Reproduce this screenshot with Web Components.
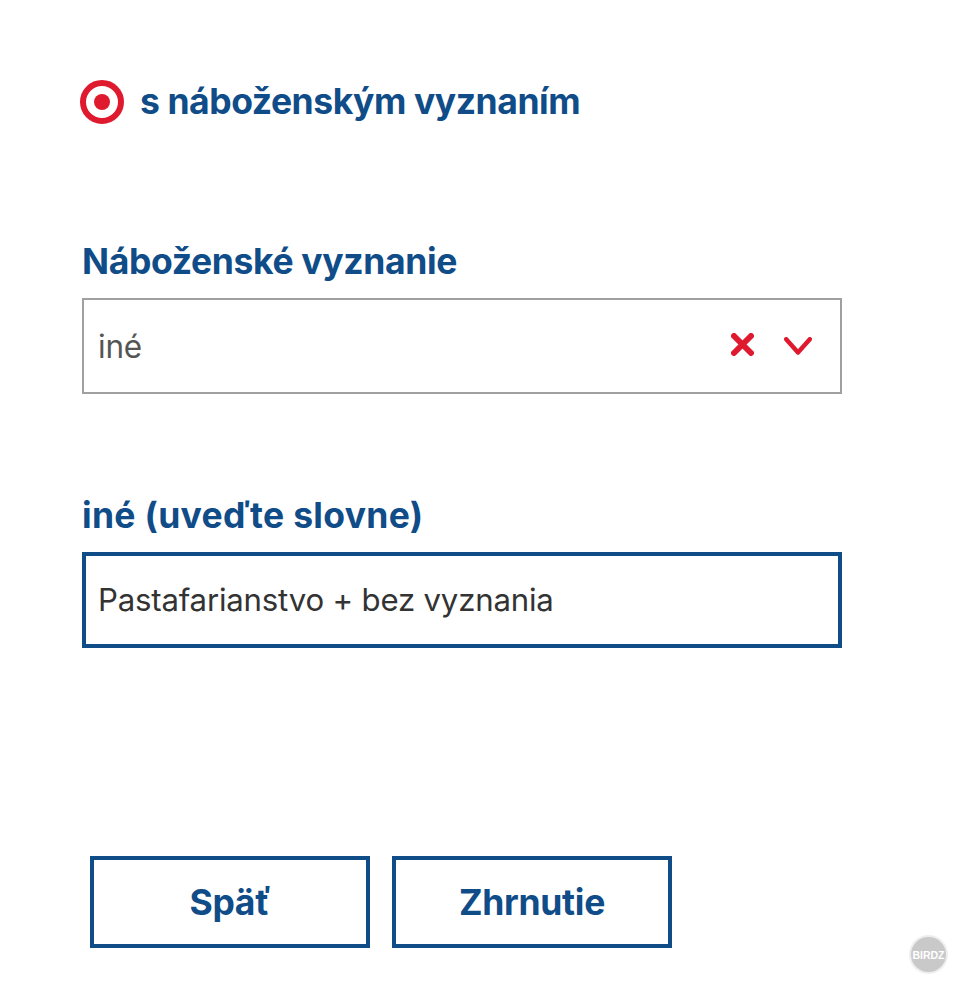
<!DOCTYPE html>
<html lang="sk"><head><meta charset="utf-8"><title>Formulár</title>
<style>
html,body{margin:0;padding:0;background:#fff;}
body{font-family:Inter,"Noto Sans",sans-serif;width:958px;height:984px;overflow:hidden;position:relative;}
</style></head><body>
<form-page>
<section-title>s náboženským vyznaním</section-title>
<form-field label="Náboženské vyznanie" style="margin-top:118px"><select-box>iné</select-box></form-field>
<form-field label="iné (uveďte slovne)" style="margin-top:102px;--ls:.3px"><text-box>Pastafarianstvo + bez vyznania</text-box></form-field>
<button-row><nav-button>Späť</nav-button><nav-button>Zhrnutie</nav-button></button-row>
</form-page>
<birdz-badge></birdz-badge>
<script>
function def(name,html){customElements.define(name,class extends HTMLElement{constructor(){super();this.attachShadow({mode:'open'}).innerHTML=html;}});}
def('form-page',`<style>:host{display:block;padding:80px 0 0 82px;box-sizing:border-box;width:958px}</style><slot></slot>`);
def('section-title',`<style>:host{display:flex;align-items:center;gap:16px;margin-left:-2px;height:44px;color:#0f4c88;font-size:35.5px;font-weight:700;letter-spacing:-.45px}
svg{width:44px;height:44px;flex:none}span{padding-bottom:2px}</style>
<svg viewBox="0 0 44 44"><circle cx="22" cy="22" r="19" fill="none" stroke="#df1a2e" stroke-width="6"/><circle cx="22" cy="22" r="8" fill="#df1a2e"/></svg><span><slot></slot></span>`);
customElements.define('form-field',class extends HTMLElement{constructor(){super();this.attachShadow({mode:'open'}).innerHTML=`<style>:host{display:block;width:760px}
.l{color:#0f4c88;font-size:35.5px;font-weight:700;letter-spacing:var(--ls,-.35px);line-height:40px;margin-bottom:16px}</style><div class="l"></div><slot></slot>`;}
connectedCallback(){this.shadowRoot.querySelector('.l').textContent=this.getAttribute('label');}});
def('select-box',`<style>:host{display:flex;align-items:center;box-sizing:border-box;height:96px;border:2.5px solid #a0a0a0;padding:0 28.5px 0 14px;color:#555;font-size:31.5px;letter-spacing:-.2px}
span{flex:1}svg{display:block}</style><span><slot></slot></span>
<svg width="23" height="23" viewBox="0 0 23 23" style="margin-right:29.5px;margin-top:-3px"><path d="M3 3L20 20M20 3L3 20" stroke="#df1a2e" stroke-width="6" stroke-linecap="round"/></svg>
<svg width="28" height="18" viewBox="0 0 28 18"><path d="M2.2 2.2L14 15.5L25.8 2.2" fill="none" stroke="#df1a2e" stroke-width="4.4" stroke-linecap="round" stroke-linejoin="round"/></svg>`);
def('text-box',`<style>:host{display:flex;align-items:center;box-sizing:border-box;height:96px;border:4px solid #0f4c88;padding:0 12px;color:#333;font-size:31.2px;letter-spacing:-.2px}</style><slot></slot>`);
def('button-row',`<style>:host{display:flex;gap:22px;margin:208px 0 0 8px}</style><slot></slot>`);
def('nav-button',`<style>:host{display:flex;align-items:center;justify-content:center;box-sizing:border-box;width:280px;height:92px;border:4px solid #0f4c88;color:#0f4c88;font-size:35.5px;font-weight:700;letter-spacing:-.3px}</style><slot></slot>`);
def('birdz-badge',`<style>:host{position:absolute;left:911px;top:937px;width:35px;height:35px;border-radius:50%;background:#c9c9c9;box-shadow:0 0 0 2px #eee;display:flex;align-items:center;justify-content:center;color:#fff;font:700 10.5px "Liberation Sans",sans-serif}</style>BIRDZ`);
</script>
</body></html>
